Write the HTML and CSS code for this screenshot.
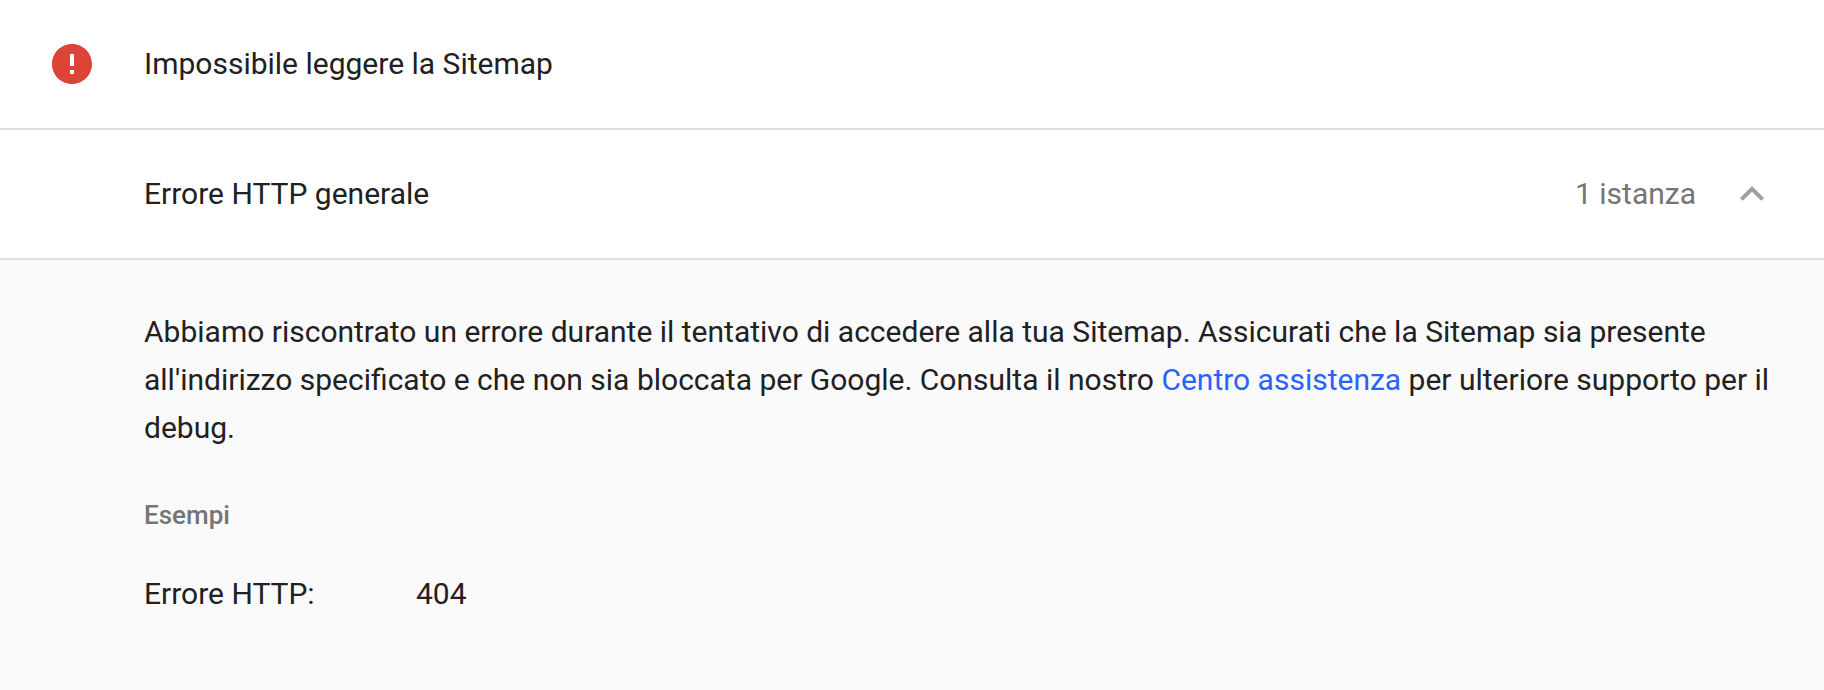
FILE: index.html
```html
<!DOCTYPE html>
<html lang="it">
<head>
<meta charset="utf-8">
<title>Sitemap</title>
<link rel="stylesheet" href="styles.css">
</head>
<body>
<div class="row head">
  <svg class="err" viewBox="2 2 20 20" width="40" height="40"><path fill="#db4437" d="M12 2C6.48 2 2 6.48 2 12s4.48 10 10 10 10-4.48 10-10S17.52 2 12 2zm1 15h-2v-2h2v2zm0-4h-2V7h2v6z"/></svg>
  <span class="txt">Impossibile leggere la Sitemap</span>
</div>
<div class="row sub">
  <span class="txt grow">Errore HTTP generale</span>
  <span class="txt count">1 istanza</span>
  <svg class="chev" viewBox="0 0 24 24" width="48" height="48"><path fill="#9e9e9e" d="M12 8l-6 6 1.41 1.41L12 10.83l4.59 4.58L18 14z"/></svg>
</div>
<div class="detail">
  <p class="desc">Abbiamo riscontrato un errore durante il tentativo di accedere alla tua Sitemap. Assicurati che la Sitemap sia presente all'indirizzo specificato e che non sia bloccata per Google. Consulta il nostro <a href="#">Centro assistenza</a> per ulteriore supporto per il debug.</p>
  <div class="label">Esempi</div>
  <div class="kv"><span class="k">Errore HTTP:</span><span>404</span></div>
</div>
</body>
</html>
```
FILE: styles.css
```css
* { box-sizing: border-box; }
html, body { margin: 0; padding: 0; }
body { width: 1824px; height: 690px; overflow: hidden; background: #fff; color: #212121; font-family: Roboto, sans-serif; font-size: 30px; }
.row { display: flex; align-items: center; height: 130px; border-bottom: 2px solid #e0e0e0; padding-left: 144px; }
.head { padding-left: 52px; }
.txt { padding-bottom: 2px; }
.err { margin-right: 52px; flex: none; }
.grow { flex: 1; }
.count { color: #757575; margin-right: 32px; }
.chev { margin-right: 48px; }
.detail { background: #fafafa; height: 430px; padding: 48px 48px 0 144px; }
.desc { margin: 0; line-height: 48px; }
.desc a { color: #2962ff; text-decoration: none; }
.label { color: #757575; font-size: 26px; font-weight: 500; margin-top: 47px; line-height: 32px; }
.kv { display: flex; margin-top: 43px; line-height: 40px; }
.k { width: 272px; }
```
